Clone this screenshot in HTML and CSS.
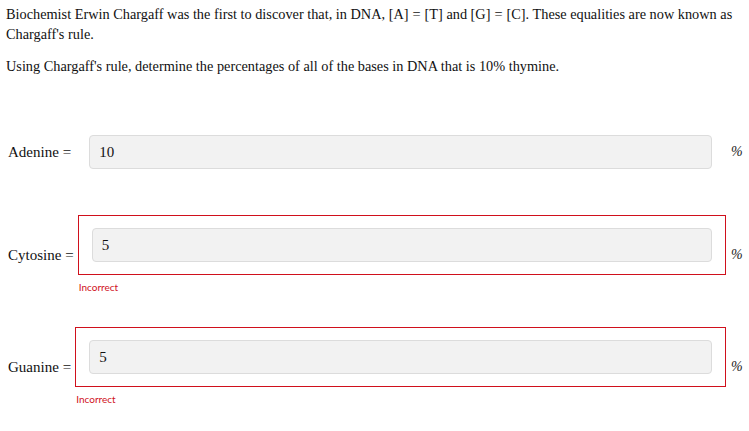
FILE: index.html
```html
<!DOCTYPE html>
<html>
<head>
<meta charset="utf-8">
<link rel="stylesheet" href="styles.css">
</head>
<body>
<div class="page">
  <p class="text"><span>Biochemist Erwin Chargaff was the first to discover that, in DNA, [A]</span><span class="eq">=</span><span>[T] and [G]</span><span class="eq">=</span><span>[C]. These equalities are now known as</span> <span>Chargaff's rule.</span></p>
  <p class="text">Using Chargaff's rule, determine the percentages of all of the bases in DNA that is 10% thymine.</p>

  <div class="rows">
    <div class="row">
      <label class="label"><span>Adenine</span><span class="eq">=</span></label>
      <div class="field">
        <div class="box">
          <input class="input" type="text" value="10">
        </div>
      </div>
      <span class="unit">%</span>
    </div>

    <div class="row">
      <label class="label"><span>Cytosine</span><span class="eq">=</span></label>
      <div class="field">
        <div class="box box-error">
          <input class="input" type="text" value="5">
        </div>
        <div class="error">Incorrect</div>
      </div>
      <span class="unit">%</span>
    </div>

    <div class="row">
      <label class="label"><span>Guanine</span><span class="eq">=</span></label>
      <div class="field">
        <div class="box box-error">
          <input class="input" type="text" value="5">
        </div>
        <div class="error">Incorrect</div>
      </div>
      <span class="unit">%</span>
    </div>
  </div>
</div>
</body>
</html>
```

FILE: styles.css
```css
html, body {
  margin: 0;
  padding: 0;
  background: #ffffff;
}

body {
  font-family: "Liberation Serif", "Times New Roman", serif;
  font-size: 15px;
  line-height: 20px;
  color: #111111;
}

.page {
  padding: 4px 5px 0 6px;
}

.text {
  margin: 0 0 12px 0;
  font-size: 14.3px;
}

.eq {
  padding: 0 4px;
}

.label .eq {
  padding: 0 0 0 4px;
}

.rows {
  margin-top: 46px;
  display: flex;
  flex-direction: column;
  gap: 33px;
}

.row {
  display: flex;
  align-items: center;
  gap: 4px;
}

.label {
  padding-left: 2px;
  white-space: nowrap;
}

.field {
  flex: 1;
  display: flex;
  flex-direction: column;
}

.box {
  border: 1px solid transparent;
  padding: 12px 13px;
}

.box-error {
  border-color: #d0101c;
}

.input {
  display: block;
  box-sizing: border-box;
  width: 100%;
  height: 34px;
  margin: 0;
  padding: 0 9px;
  border: 1px solid #dcdcdc;
  border-radius: 4px;
  background: #f2f2f2;
  font-family: "Liberation Serif", "Times New Roman", serif;
  font-size: 15px;
  color: #111111;
  outline: none;
}

.error {
  margin-top: 5px;
  padding-left: 1px;
  font-family: Lato, "Open Sans", sans-serif;
  font-size: 10px;
  line-height: 14px;
  color: #d0101c;
}

.unit {
  width: 13px;
  margin-left: 1px;
  font-style: italic;
  font-size: 14px;
  color: #222222;
}
```
